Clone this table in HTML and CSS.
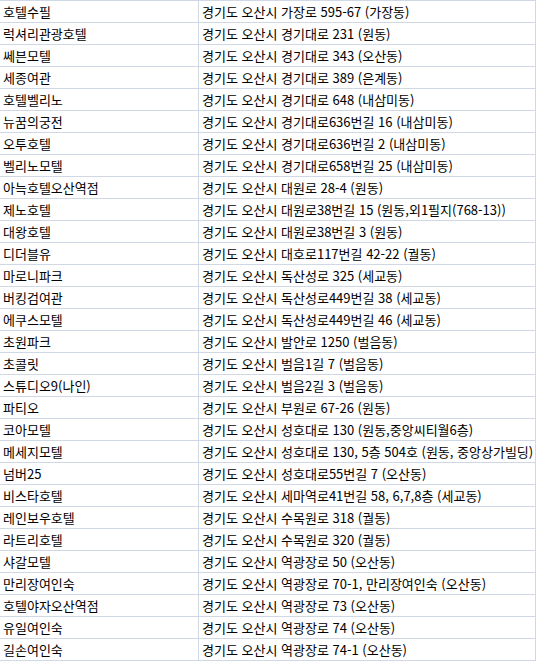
FILE: index.html
```html
<!DOCTYPE html>
<html lang="ko">
<head>
<meta charset="utf-8">
<title>오산시 숙박업소</title>
<link rel="stylesheet" href="styles.css">
</head>
<body>
<div class="sheet">
  <div class="cell name">호텔수필</div><div class="cell addr">경기도 오산시 가장로 595-67 (가장동)</div>
  <div class="cell name">럭셔리관광호텔</div><div class="cell addr">경기도 오산시 경기대로 231 (원동)</div>
  <div class="cell name">쎄븐모텔</div><div class="cell addr">경기도 오산시 경기대로 343 (오산동)</div>
  <div class="cell name">세종여관</div><div class="cell addr">경기도 오산시 경기대로 389 (은계동)</div>
  <div class="cell name">호텔벨리노</div><div class="cell addr">경기도 오산시 경기대로 648 (내삼미동)</div>
  <div class="cell name">뉴꿈의궁전</div><div class="cell addr">경기도 오산시 경기대로636번길 16 (내삼미동)</div>
  <div class="cell name">오투호텔</div><div class="cell addr">경기도 오산시 경기대로636번길 2 (내삼미동)</div>
  <div class="cell name">벨리노모텔</div><div class="cell addr">경기도 오산시 경기대로658번길 25 (내삼미동)</div>
  <div class="cell name">아늑호텔오산역점</div><div class="cell addr">경기도 오산시 대원로 28-4 (원동)</div>
  <div class="cell name">제노호텔</div><div class="cell addr">경기도 오산시 대원로38번길 15 (원동,외1필지(768-13))</div>
  <div class="cell name">대왕호텔</div><div class="cell addr">경기도 오산시 대원로38번길 3 (원동)</div>
  <div class="cell name">디더블유</div><div class="cell addr">경기도 오산시 대호로117번길 42-22 (궐동)</div>
  <div class="cell name">마로니파크</div><div class="cell addr">경기도 오산시 독산성로 325 (세교동)</div>
  <div class="cell name">버킹검여관</div><div class="cell addr">경기도 오산시 독산성로449번길 38 (세교동)</div>
  <div class="cell name">에쿠스모텔</div><div class="cell addr">경기도 오산시 독산성로449번길 46 (세교동)</div>
  <div class="cell name">초원파크</div><div class="cell addr">경기도 오산시 발안로 1250 (벌음동)</div>
  <div class="cell name">초콜릿</div><div class="cell addr">경기도 오산시 벌음1길 7 (벌음동)</div>
  <div class="cell name">스튜디오9(나인)</div><div class="cell addr">경기도 오산시 벌음2길 3 (벌음동)</div>
  <div class="cell name">파티오</div><div class="cell addr">경기도 오산시 부원로 67-26 (원동)</div>
  <div class="cell name">코아모텔</div><div class="cell addr">경기도 오산시 성호대로 130 (원동,중앙씨티월6층)</div>
  <div class="cell name">메세지모텔</div><div class="cell addr">경기도 오산시 성호대로 130, 5층 504호 (원동, 중앙상가빌딩)</div>
  <div class="cell name">넘버25</div><div class="cell addr">경기도 오산시 성호대로55번길 7 (오산동)</div>
  <div class="cell name">비스타호텔</div><div class="cell addr">경기도 오산시 세마역로41번길 58, 6,7,8층 (세교동)</div>
  <div class="cell name">레인보우호텔</div><div class="cell addr">경기도 오산시 수목원로 318 (궐동)</div>
  <div class="cell name">라트리호텔</div><div class="cell addr">경기도 오산시 수목원로 320 (궐동)</div>
  <div class="cell name">샤갈모텔</div><div class="cell addr">경기도 오산시 역광장로 50 (오산동)</div>
  <div class="cell name">만리장여인숙</div><div class="cell addr">경기도 오산시 역광장로 70-1, 만리장여인숙 (오산동)</div>
  <div class="cell name">호텔야자오산역점</div><div class="cell addr">경기도 오산시 역광장로 73 (오산동)</div>
  <div class="cell name">유일여인숙</div><div class="cell addr">경기도 오산시 역광장로 74 (오산동)</div>
  <div class="cell name">길손여인숙</div><div class="cell addr">경기도 오산시 역광장로 74-1 (오산동)</div>
</div>
</body>
</html>
```

FILE: styles.css
```css
html, body {
  margin: 0;
  padding: 0;
  background: #ffffff;
}

body {
  font-family: "Noto Sans CJK KR", "Noto Sans", sans-serif;
  font-size: 13px;
  color: #000000;
  overflow: hidden;
}

.sheet {
  display: grid;
  grid-template-columns: 199px 337px;
  grid-auto-rows: 22px;
  margin-left: -1px;
  border-top: 1px solid #d0d7e5;
  border-left: 1px solid #d0d7e5;
  width: max-content;
}

.cell {
  box-sizing: border-box;
  height: 22px;
  border-right: 1px solid #d0d7e5;
  border-bottom: 1px solid #d0d7e5;
  padding: 0 0 0 3px;
  line-height: 21px;
  white-space: nowrap;
  overflow: hidden;
}
```
